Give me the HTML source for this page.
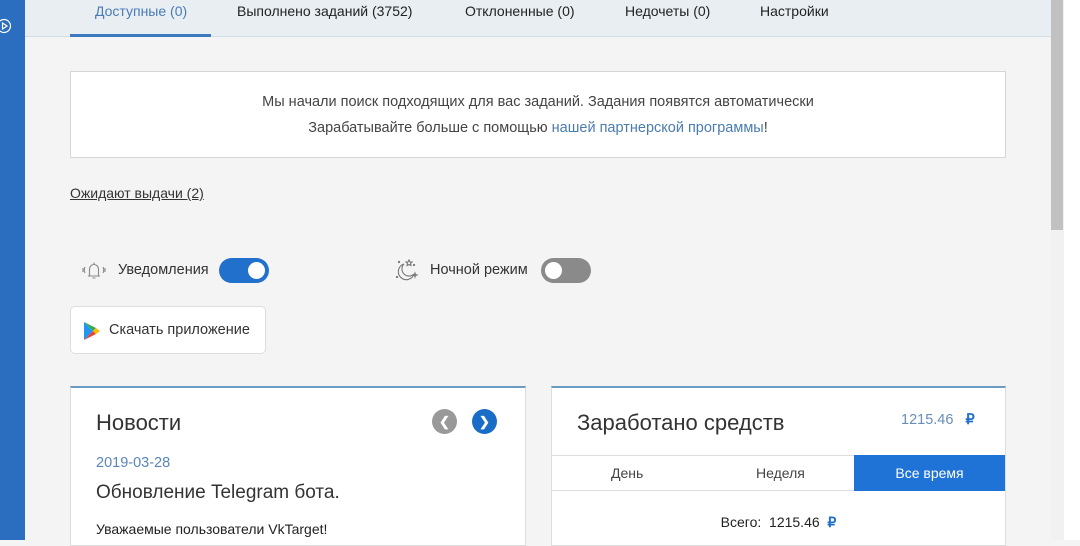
<!DOCTYPE html>
<html><head><meta charset="utf-8"><style>
*{margin:0;padding:0;box-sizing:border-box}
body{width:1080px;height:540px;overflow:hidden;background:#f4f4f4;font-family:"Liberation Sans",sans-serif;color:#333;position:relative}
.side{position:absolute;left:0;top:0;width:25px;height:540px;background:#2b6dbf}
.hdr{position:absolute;left:25px;top:0;width:1026px;height:37px;background:#e8eef1;border-bottom:1px solid #d3dde2}
.tab{position:absolute;top:3px;font-size:14px;color:#222}
.ul{position:absolute;left:70px;top:34px;width:141px;height:3px;background:#3c7bc0}
.sb{position:absolute;left:1051px;top:0;width:13px;height:540px;background:#f1f1f1}
.sb div{width:12px;height:230px;background:#c1c1c1}
.rw{position:absolute;left:1064px;top:0;width:16px;height:540px;background:#fff}
.box{position:absolute;left:70px;top:71px;width:936px;height:87px;background:#fff;border:1px solid #d6d6d6;text-align:center;font-size:14.5px;color:#444;line-height:26px;padding-top:17px}
.box a{color:#4a7cb0}
.wait{position:absolute;left:70px;top:185px;font-size:14px;text-decoration:underline;color:#333}
.lbl{position:absolute;top:262px;font-size:14.5px;color:#333}
.tg{position:absolute;top:258px;width:50px;height:25px;border-radius:13px}
.tg i{position:absolute;top:4px;width:17px;height:17px;border-radius:50%;background:#fff}
.btn{position:absolute;left:70px;top:306px;width:196px;height:48px;background:#fff;border:1px solid #ddd;border-radius:5px;font-size:14.5px;color:#333}
.card{position:absolute;top:386px;height:160px;background:#fff;border:1px solid #ddd;border-top:2px solid #6a9bc3}
</style></head><body>
<div class="side"><svg style="position:absolute;left:-4px;top:18px" width="16" height="16" viewBox="0 0 16 16" fill="none" stroke="#fff" stroke-width="1.2"><circle cx="8" cy="8" r="6.5"/><path d="M6.5 5v6l4.5-3z"/></svg></div>
<div class="hdr"></div>
<div class="tab" style="left:95px;color:#4a7cb8">Доступные (0)</div>
<div class="tab" style="left:237px">Выполнено заданий (3752)</div>
<div class="tab" style="left:465px">Отклоненные (0)</div>
<div class="tab" style="left:625px">Недочеты (0)</div>
<div class="tab" style="left:760px">Настройки</div>
<div class="ul"></div>
<div class="box">Мы начали поиск подходящих для вас заданий. Задания появятся автоматически<br>Зарабатывайте больше с помощью <a>нашей партнерской программы</a>!</div>
<div class="wait">Ожидают выдачи (2)</div>
<svg style="position:absolute;left:81px;top:257px" width="26" height="26" viewBox="0 0 26 26" fill="none" stroke="#888" stroke-width="1.1"><path d="M7 19h12M8.5 19v-7a4.5 4.5 0 0 1 9 0v7M11.5 21h3M13 5.5v2M4 10q-1.5 3 0 6M22 10q1.5 3 0 6M2 11v4M24 11v4"/></svg>
<div class="lbl" style="left:118px">Уведомления</div>
<div class="tg" style="left:219px;background:#2170cc"><i style="left:29px"></i></div>
<svg style="position:absolute;left:394px;top:256px" width="26" height="26" viewBox="0 0 26 26" fill="none" stroke="#777" stroke-width="1.1"><path d="M10 8a8 8 0 1 0 10 10a7 7 0 0 1-10-10z"/><path d="M15 4l1 2 2 0-1.5 1.5.5 2-2-1-2 1 .5-2L12 6h2z"/><path d="M21 17l.5 1.5 1.5.5-1.5.5-.5 1.5-.5-1.5-1.5-.5 1.5-.5z"/><circle cx="5" cy="6" r=".6"/><circle cx="20" cy="9" r=".6"/><circle cx="3" cy="21" r=".6"/></svg>
<div class="lbl" style="left:430px">Ночной режим</div>
<div class="tg" style="left:541px;background:#8a8a8a"><i style="left:4px"></i></div>
<div class="btn"><svg style="position:absolute;left:13px;top:15px" width="16" height="18" viewBox="0 0 16 18"><path d="M0 0l9 9-9 9z" fill="#2196f3"/><path d="M0 0l12 6-3 3z" fill="#34a853"/><path d="M0 18l12-6-3-3z" fill="#ea4335"/><path d="M12 6l4 3-4 3-3-3z" fill="#fbbc04"/></svg><span style="position:absolute;left:38px;top:15px">Скачать приложение</span></div>
<div class="card" style="left:70px;width:456px">
<div style="position:absolute;left:25px;top:22px;font-size:22px;color:#333">Новости</div>
<div style="position:absolute;left:361px;top:21px;width:25px;height:25px;border-radius:50%;background:#999;color:#fff;font-size:13px;text-align:center;line-height:25px;font-weight:bold">&#10094;</div>
<div style="position:absolute;left:401px;top:21px;width:25px;height:25px;border-radius:50%;background:#1a6dc6;color:#fff;font-size:13px;text-align:center;line-height:25px;font-weight:bold">&#10095;</div>
<div style="position:absolute;left:25px;top:67px;font-size:14.5px;color:#5a86b8">2019-03-28</div>
<div style="position:absolute;left:25px;top:94px;font-size:19px;color:#333">Обновление Telegram бота.</div>
<div style="position:absolute;left:25px;top:133px;font-size:14px;color:#222">Уважаемые пользователи VkTarget!</div>
</div>
<div class="card" style="left:551px;width:455px">
<div style="position:absolute;left:25px;top:22px;font-size:22px;color:#333">Заработано средств</div>
<div style="position:absolute;left:349px;top:24px;font-size:14.5px;color:#6a8db8">1215.46 <b style="color:#2170cc;margin-left:8px">₽</b></div>
<div style="position:absolute;left:0;top:67px;width:453px;height:36px;border-top:1px solid #ddd;border-bottom:1px solid #ddd;font-size:14px;color:#444">
<span style="position:absolute;left:59px;top:9px">День</span>
<span style="position:absolute;left:204px;top:9px">Неделя</span>
<div style="position:absolute;left:302px;top:-1px;width:151px;height:36px;background:#1f73d6;color:#fff;text-align:center;line-height:36px">Все время</div>
</div>
<div style="position:absolute;left:0;width:453px;top:126px;text-align:center;font-size:14px;color:#222">Всего:&nbsp; 1215.46 &nbsp;<b style="color:#2170cc">₽</b></div>
</div>
<div class="sb"><div></div></div>
<div class="rw"></div>
</body></html>
